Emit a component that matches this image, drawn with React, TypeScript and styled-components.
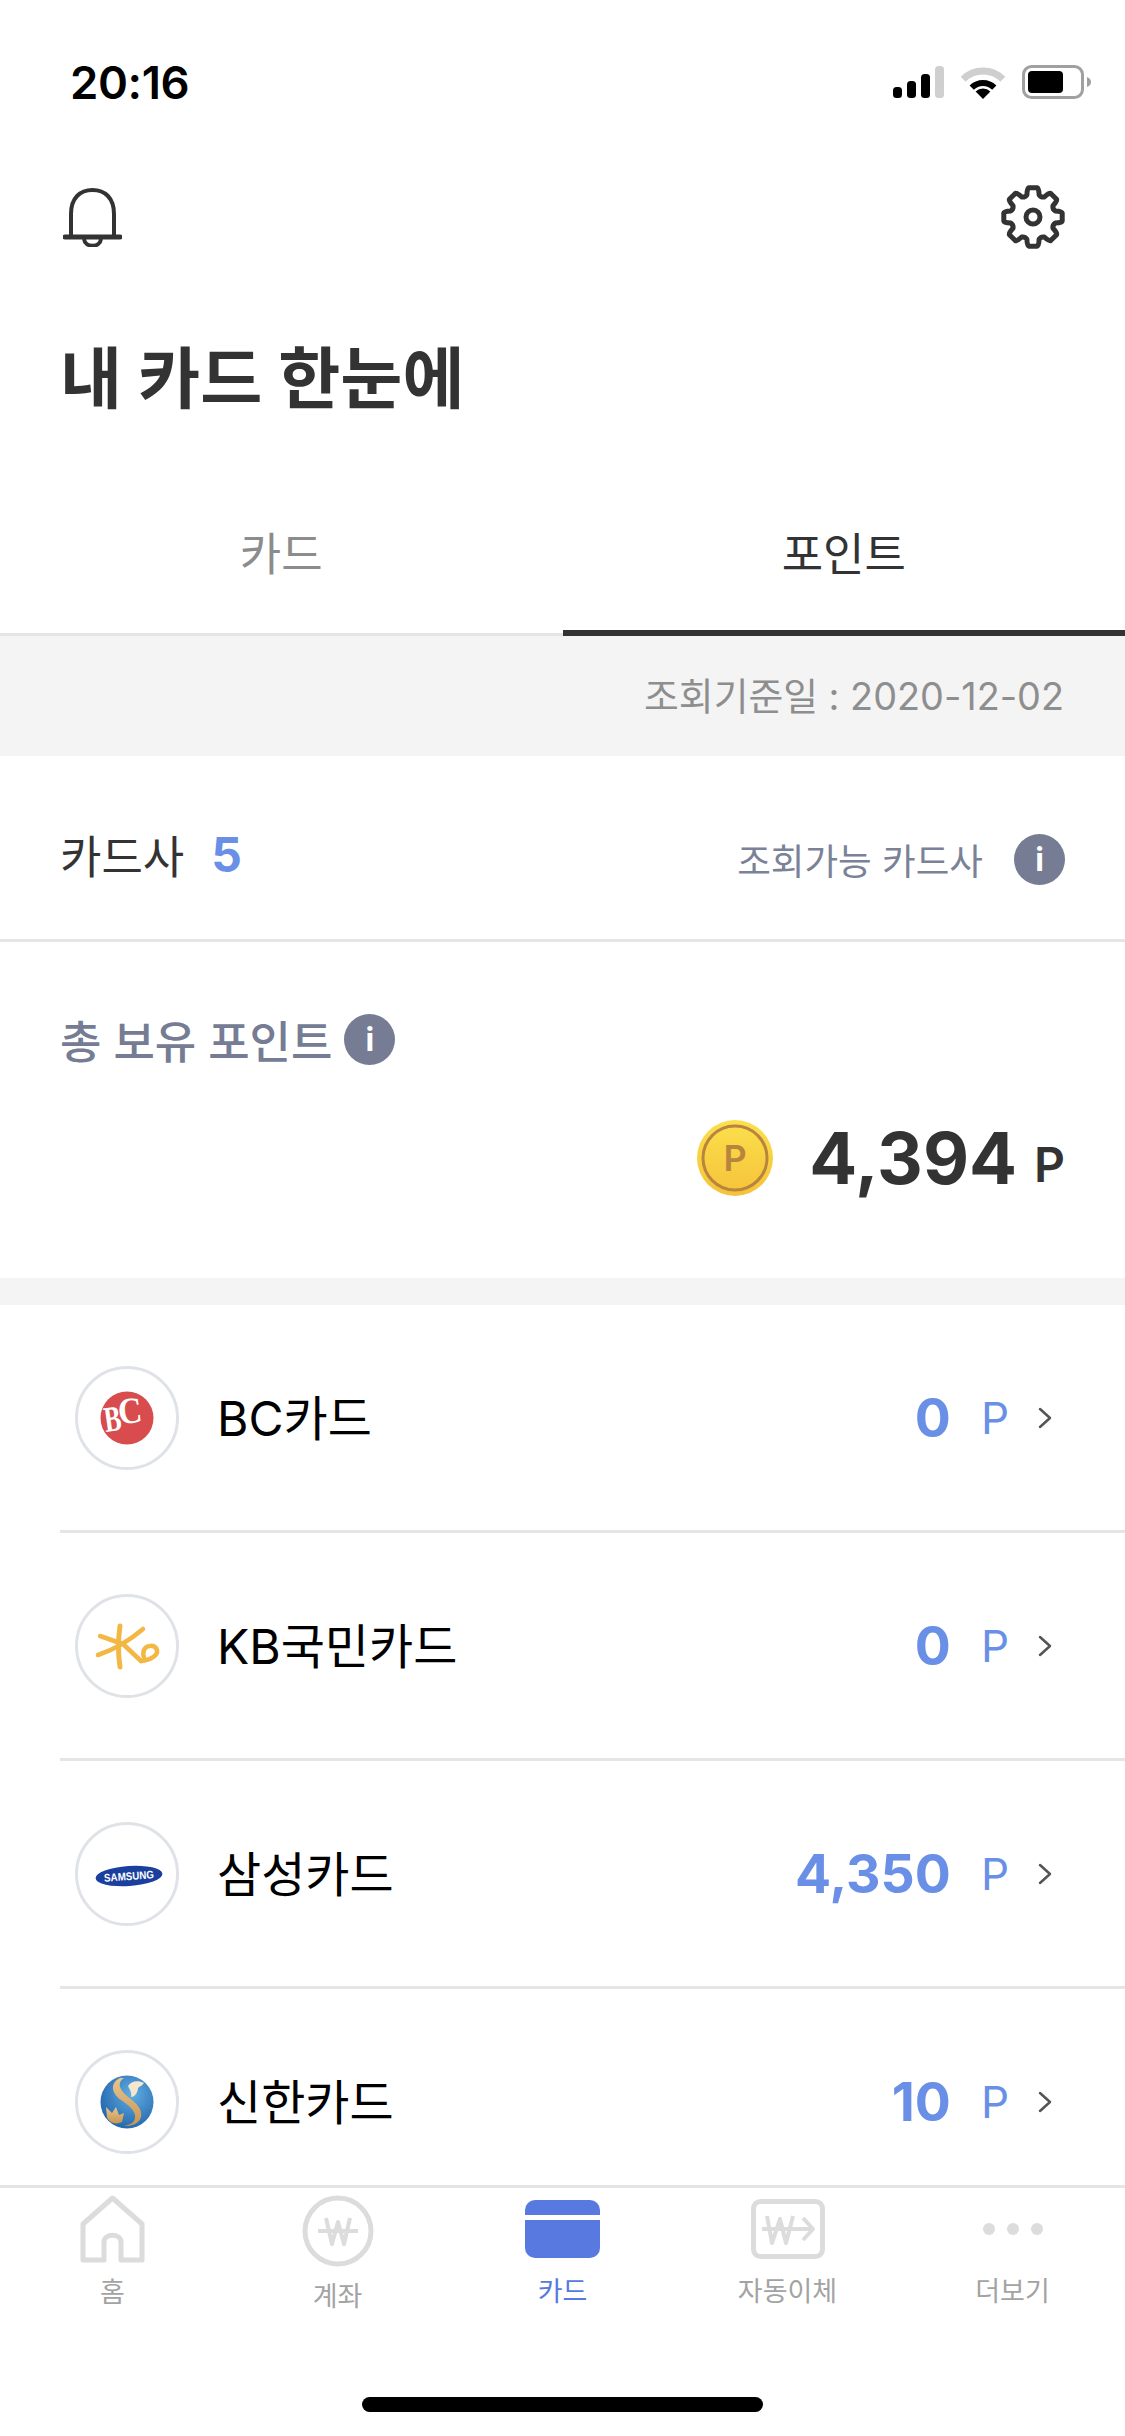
import React from "react";
import styled, { createGlobalStyle } from "styled-components";

const GlobalStyle = createGlobalStyle`
  html, body {
    margin: 0;
    padding: 0;
    background: #fff;
  }
  body {
    font-family: Inter, "Noto Sans CJK KR", sans-serif;
  }
`;

const Page = styled.div`
  width: 1125px;
  height: 2436px;
  display: flex;
  flex-direction: column;
  overflow: hidden;
  background: #fff;
`;

const Scroll = styled.div`
  flex: 1;
  min-height: 0;
  overflow: hidden;
`;

const StatusBar = styled.div`
  height: 164px;
  display: flex;
  align-items: center;
  justify-content: space-between;
  padding: 0 34px 0 70px;
  box-sizing: border-box;
`;

const Clock = styled.div`
  font-family: Inter, sans-serif;
  font-size: 45.5px;
  font-weight: 600;
  color: #000;
  letter-spacing: -0.4px;
`;

const StatusIcons = styled.div`
  display: flex;
  align-items: center;
  gap: 16px;
`;

const TopIcons = styled.div`
  height: 66px;
  margin-top: 20px;
  padding: 0 60px 0 63px;
  display: flex;
  align-items: center;
  justify-content: space-between;
`;

const Title = styled.h1`
  margin: 79px 0 0;
  padding-left: 60px;
  height: 99px;
  font-size: 67.5px;
  line-height: 99px;
  font-weight: 700;
  color: #333;
`;

const Tabs = styled.div`
  height: 208px;
  display: grid;
  grid-template-columns: 1fr 1fr;
`;

const Tab = styled.div<{ $active?: boolean }>`
  display: flex;
  justify-content: center;
  align-items: flex-end;
  box-sizing: border-box;
  font-size: 45px;
  line-height: 60px;
  padding-bottom: ${(p) => (p.$active ? "45px" : "48px")};
  color: ${(p) => (p.$active ? "#333" : "#8c8c8c")};
  border-bottom: ${(p) => (p.$active ? "6px solid #333" : "3px solid #e5e5e5")};
`;

const DateBand = styled.div`
  height: 120px;
  box-sizing: border-box;
  padding: 0 61px 6px 0;
  background: #f4f4f4;
  display: flex;
  align-items: center;
  justify-content: flex-end;
  font-size: 37.8px;
  color: #8e8e8e;
`;

const CompanyRow = styled.div`
  height: 186px;
  box-sizing: border-box;
  border-bottom: 3px solid #e5e5e5;
  padding: 14px 60px 0 60px;
  display: flex;
  align-items: center;
  justify-content: space-between;
`;

const CompanyLabel = styled.div`
  font-size: 45px;
  color: #333;
  display: flex;
  align-items: center;
  gap: 27px;
`;

const CompanyCount = styled.span`
  font-size: 48px;
  font-weight: 700;
  color: #6a8fe6;
`;

const CompanyLink = styled.div`
  display: flex;
  align-items: center;
  gap: 31px;
  font-size: 36.6px;
  color: #7b8297;
  padding-top: 10px;
`;

const Info = styled.span`
  width: 51px;
  height: 51px;
  border-radius: 50%;
  background: #757c93;
  color: #fff;
  display: flex;
  align-items: center;
  justify-content: center;
  font-size: 32px;
  font-weight: 700;
`;

const TotalSection = styled.div`
  height: 336px;
  box-sizing: border-box;
  padding: 65px 60px 0;
`;

const TotalHeading = styled.div`
  display: flex;
  align-items: center;
  gap: 12px;
  height: 64px;
  font-size: 45px;
  font-weight: 500;
  color: #757c93;
`;

const TotalAmount = styled.div`
  margin-top: 47px;
  height: 80px;
  display: flex;
  align-items: center;
  justify-content: flex-end;
`;

const TotalNumber = styled.span`
  margin-left: 36px;
  font-size: 71px;
  font-weight: 700;
  color: #333;
`;

const TotalUnit = styled.span`
  margin-left: 17px;
  padding-top: 12px;
  font-size: 48px;
  font-weight: 600;
  color: #333;
`;

const Gap = styled.div`
  height: 27px;
  background: #f4f4f4;
`;

const Row = styled.div`
  height: 228px;
  margin-left: 60px;
  box-sizing: border-box;
  border-bottom: 3px solid #e5e5e5;
  padding: 0 72px 0 15px;
  display: flex;
  align-items: center;
`;

const LogoCircle = styled.div`
  width: 104px;
  height: 104px;
  box-sizing: border-box;
  border: 3px solid #dfe3e8;
  border-radius: 50%;
  flex: none;
  overflow: hidden;
`;

const RowName = styled.div`
  margin: 0 0 5px 38px;
  flex: 1;
  font-size: 48px;
  color: #000;
`;

const RowPoints = styled.span`
  font-size: 53.5px;
  font-weight: 700;
  color: #6a8fe6;
`;

const RowUnit = styled.span`
  margin: 0 28px 0 30px;
  font-size: 44px;
  color: #6a8fe6;
`;

const BottomNav = styled.nav`
  height: 251px;
  flex: none;
  box-sizing: border-box;
  border-top: 3px solid #e5e5e5;
  padding-top: 7px;
  display: grid;
  grid-template-columns: repeat(5, 1fr);
  grid-template-rows: 115px 1fr;
  background: #fff;
  position: relative;
`;

const NavItem = styled.div<{ $active?: boolean }>`
  display: flex;
  flex-direction: column;
  align-items: center;
  font-size: 27px;
  line-height: 36px;
  color: ${(p) => (p.$active ? "#5779e0" : "#a3a3a3")};
`;

const NavIcon = styled.div`
  height: 76px;
  margin-bottom: 12px;
  display: flex;
  align-items: center;
  justify-content: center;
`;

const HomeBar = styled.div`
  position: absolute;
  left: 362px;
  bottom: 24px;
  width: 401px;
  height: 15px;
  border-radius: 8px;
  background: #000;
`;

const gearPath = (() => {
  const cx = 32;
  const cy = 32;
  const pts: string[] = [];
  for (let i = 0; i < 8; i++) {
    const a = (i * Math.PI) / 4 - Math.PI / 2;
    const w = 0.2;
    const p = (r: number, t: number) =>
      `${(cx + r * Math.cos(t)).toFixed(1)} ${(cy + r * Math.sin(t)).toFixed(1)}`;
    pts.push(`${i === 0 ? "M" : "L"}${p(23, a - w - 0.07)}`);
    pts.push(`Q${p(29.5, a - w)} ${p(29.5, a - w + 0.06)}`);
    pts.push(`L${p(29.5, a + w - 0.06)}`);
    pts.push(`Q${p(29.5, a + w)} ${p(23, a + w + 0.07)}`);
    pts.push(`Q${p(21, a + Math.PI / 8)} ${p(23, a + Math.PI / 4 - w - 0.07)}`);
  }
  return pts.join(" ") + " Z";
})();

const Signal = () => (
  <svg width="51" height="32" viewBox="0 0 51 32">
    <rect x="0" y="21" width="9" height="11" rx="3.5" fill="#000" />
    <rect x="14" y="15" width="9" height="17" rx="3.5" fill="#000" />
    <rect x="28" y="8" width="9" height="24" rx="3.5" fill="#000" />
    <rect x="42" y="0" width="9" height="32" rx="3.5" fill="#cfcfcf" />
  </svg>
);

const Wifi = () => (
  <svg width="46" height="33" viewBox="0 0 46 33">
    <path d="M3.2 13.2A28 28 0 0 1 42.8 13.2" fill="none" stroke="#cfcfcf" strokeWidth="7" />
    <path d="M11.7 21.7A16 16 0 0 1 34.3 21.7" fill="none" stroke="#000" strokeWidth="6" />
    <path d="M23 33L15.6 25.6A10.5 10.5 0 0 1 30.4 25.6Z" fill="#000" />
  </svg>
);

const Battery = () => (
  <svg width="69" height="34" viewBox="0 0 69 34">
    <rect x="1.5" y="1.5" width="59" height="31" rx="8" fill="none" stroke="#a0a0a0" strokeWidth="3" />
    <rect x="6" y="6" width="35" height="22" rx="4" fill="#000" />
    <path d="M65 12C68 13 69 15 69 17C69 19 68 21 65 22Z" fill="#a0a0a0" />
  </svg>
);

const Bell = () => (
  <svg width="59" height="60" viewBox="0 0 59 60" fill="none" stroke="#333">
    <path d="M8 49V27C8 11 17 3 29.5 3S51 11 51 27V49" strokeWidth="4" />
    <path d="M2 50H57" strokeWidth="5" strokeLinecap="round" />
    <path d="M21 52C22 61 37 61 38 52" strokeWidth="4" />
  </svg>
);

const Gear = () => (
  <svg width="64" height="64" viewBox="0 0 64 64" fill="none" stroke="#333" strokeWidth="5" strokeLinejoin="round">
    <path d={gearPath} />
    <circle cx="32" cy="32" r="7" />
  </svg>
);

const Coin = () => (
  <svg width="76" height="76" viewBox="0 0 76 76">
    <defs>
      <linearGradient id="coin" x1="0" y1="0" x2="0" y2="1">
        <stop offset="0" stopColor="#fbe04c" />
        <stop offset="1" stopColor="#f5c23a" />
      </linearGradient>
    </defs>
    <circle cx="38" cy="38" r="38" fill="url(#coin)" />
    <circle cx="38" cy="38" r="32" fill="none" stroke="#b9853e" strokeWidth="3" />
    <text x="38" y="51" textAnchor="middle" fontFamily="Inter, sans-serif" fontSize="36" fontWeight="600" fill="#b9853e">
      P
    </text>
  </svg>
);

const BcLogo = () => (
  <svg width="98" height="98" viewBox="0 0 98 98">
    <circle cx="49" cy="49" r="26.5" fill="#d84c4d" />
    <text
      x="26"
      y="62"
      fontFamily="'Liberation Serif', serif"
      fontSize="36"
      fontWeight="700"
      textLength="17"
      lengthAdjust="spacingAndGlyphs"
      transform="rotate(-8 34 50)"
      fill="#fff"
    >
      B
    </text>
    <text
      x="40"
      y="54"
      fontFamily="'Liberation Serif', serif"
      fontSize="37"
      fontWeight="700"
      textLength="24"
      lengthAdjust="spacingAndGlyphs"
      transform="rotate(-6 52 42)"
      fill="#fff"
    >
      C
    </text>
  </svg>
);

const KbLogo = () => (
  <svg width="98" height="98" viewBox="0 0 98 98" fill="none" stroke="#f3b744" strokeLinecap="round" strokeLinejoin="round">
    <path d="M42 29Q39 50 42 70" strokeWidth="5" />
    <path d="M22 39L45 47L63 64" strokeWidth="4.5" />
    <path d="M20 58Q44 50 65 32" strokeWidth="4.5" />
    <path d="M63 64C72 63 80 59 79 53C77 47 68 48 66 53C65 56 65 58 66 60" strokeWidth="4.5" />
  </svg>
);

const SamsungLogo = () => (
  <svg width="98" height="98" viewBox="0 0 98 98">
    <g transform="rotate(-4 51 51)">
      <ellipse cx="51" cy="51" rx="33.5" ry="10" fill="#1b3f9e" />
      <text x="51" y="55" textAnchor="middle" fontFamily="'Liberation Sans', sans-serif" fontSize="11" fontWeight="700" textLength="50" lengthAdjust="spacingAndGlyphs" fill="#fff">
        SAMSUNG
      </text>
    </g>
  </svg>
);

const ShinhanLogo = () => (
  <svg width="98" height="98" viewBox="0 0 98 98">
    <defs>
      <radialGradient id="shinhan" cx="0.6" cy="0.35" r="0.75">
        <stop offset="0" stopColor="#62aee2" />
        <stop offset="1" stopColor="#1c5ea8" />
      </radialGradient>
      <linearGradient id="gold" x1="0" y1="0" x2="0" y2="1">
        <stop offset="0" stopColor="#e8c591" />
        <stop offset="1" stopColor="#c8954f" />
      </linearGradient>
    </defs>
    <circle cx="49" cy="49" r="26.5" fill="url(#shinhan)" />
    <path d="M42 25C32 30 33 40 43 47C53 54 60 60 56 68C54 71 50 72 46 73C56 74 65 68 63 59C61 50 50 45 45 39C41 34 40 29 46 25Z" fill="url(#gold)" />
    <path d="M28 54L34 60L38 54L41 62L46 60L44 69C38 72 31 70 29 64Z" fill="url(#gold)" />
    <path d="M50 33C53 28 60 27 66 30C64 33 62 33 60 35C60 39 57 44 53 44C54 40 52 37 50 33Z" fill="#f4e6cf" />
  </svg>
);

const Chevron = () => (
  <svg width="16" height="24" viewBox="0 0 16 24" fill="none" stroke="#555" strokeWidth="2.5" strokeLinecap="round" strokeLinejoin="round">
    <path d="M3 3L13 12L3 21" />
  </svg>
);

const HomeIcon = () => (
  <svg width="65" height="68" viewBox="0 0 65 68" fill="none" stroke="#dcdcdc" strokeWidth="5" strokeLinejoin="round">
    <path d="M32.5 3L3 29V65H24V47C24 38 41 38 41 47V65H62V29Z" />
  </svg>
);

const WonIcon = () => (
  <svg width="72" height="72" viewBox="0 0 72 72" fill="none" stroke="#dcdcdc" strokeLinejoin="round">
    <circle cx="36" cy="36" r="33" strokeWidth="5" />
    <path d="M24 23L30 49L36 27L42 49L48 23" strokeWidth="4" />
    <path d="M16 36H56" strokeWidth="4" />
  </svg>
);

const CardIcon = () => (
  <svg width="75" height="58" viewBox="0 0 75 58">
    <path d="M10 0H65A10 10 0 0 1 75 10V15H0V10A10 10 0 0 1 10 0Z" fill="#5779e0" />
    <path d="M0 20H75V48A10 10 0 0 1 65 58H10A10 10 0 0 1 0 48Z" fill="#5779e0" />
  </svg>
);

const TransferIcon = () => (
  <svg width="74" height="60" viewBox="0 0 74 60" fill="none" stroke="#dcdcdc" strokeLinejoin="round">
    <rect x="2.5" y="2.5" width="69" height="55" rx="7" strokeWidth="5" />
    <path d="M16 17L21 44L29 20L35 44L42 17" strokeWidth="4" />
    <path d="M11 30H61" strokeWidth="4" />
    <path d="M52 19L62 30L52 41" strokeWidth="4" />
  </svg>
);

const Dots = styled.div`
  display: flex;
  gap: 12px;
`;

const Dot = styled.span`
  width: 12px;
  height: 12px;
  border-radius: 50%;
  background: #dcdcdc;
`;

const cards = [
  { name: "BC카드", points: "0", logo: <BcLogo /> },
  { name: "KB국민카드", points: "0", logo: <KbLogo /> },
  { name: "삼성카드", points: "4,350", logo: <SamsungLogo /> },
  { name: "신한카드", points: "10", logo: <ShinhanLogo /> },
];

const navItems = [
  { label: "홈", icon: <HomeIcon /> },
  { label: "계좌", icon: <WonIcon /> },
  { label: "카드", icon: <CardIcon />, active: true },
  { label: "자동이체", icon: <TransferIcon /> },
  {
    label: "더보기",
    icon: (
      <Dots>
        <Dot />
        <Dot />
        <Dot />
      </Dots>
    ),
  },
];

const App: React.FC = () => (
  <Page>
    <GlobalStyle />
    <Scroll>
      <StatusBar>
        <Clock>20:16</Clock>
        <StatusIcons>
          <Signal />
          <Wifi />
          <Battery />
        </StatusIcons>
      </StatusBar>
      <TopIcons>
        <Bell />
        <Gear />
      </TopIcons>
      <Title>내 카드 한눈에</Title>
      <Tabs>
        <Tab>카드</Tab>
        <Tab $active>포인트</Tab>
      </Tabs>
      <DateBand>조회기준일 : 2020-12-02</DateBand>
      <CompanyRow>
        <CompanyLabel>
          카드사
          <CompanyCount>5</CompanyCount>
        </CompanyLabel>
        <CompanyLink>
          조회가능 카드사
          <Info>i</Info>
        </CompanyLink>
      </CompanyRow>
      <TotalSection>
        <TotalHeading>
          총 보유 포인트
          <Info>i</Info>
        </TotalHeading>
        <TotalAmount>
          <Coin />
          <TotalNumber>4,394</TotalNumber>
          <TotalUnit>P</TotalUnit>
        </TotalAmount>
      </TotalSection>
      <Gap />
      {cards.map((card) => (
        <Row key={card.name}>
          <LogoCircle>{card.logo}</LogoCircle>
          <RowName>{card.name}</RowName>
          <RowPoints>{card.points}</RowPoints>
          <RowUnit>P</RowUnit>
          <Chevron />
        </Row>
      ))}
    </Scroll>
    <BottomNav>
      {navItems.map((item) => (
        <NavItem key={item.label} $active={item.active}>
          <NavIcon>{item.icon}</NavIcon>
          {item.label}
        </NavItem>
      ))}
      <HomeBar />
    </BottomNav>
  </Page>
);

export default App;
